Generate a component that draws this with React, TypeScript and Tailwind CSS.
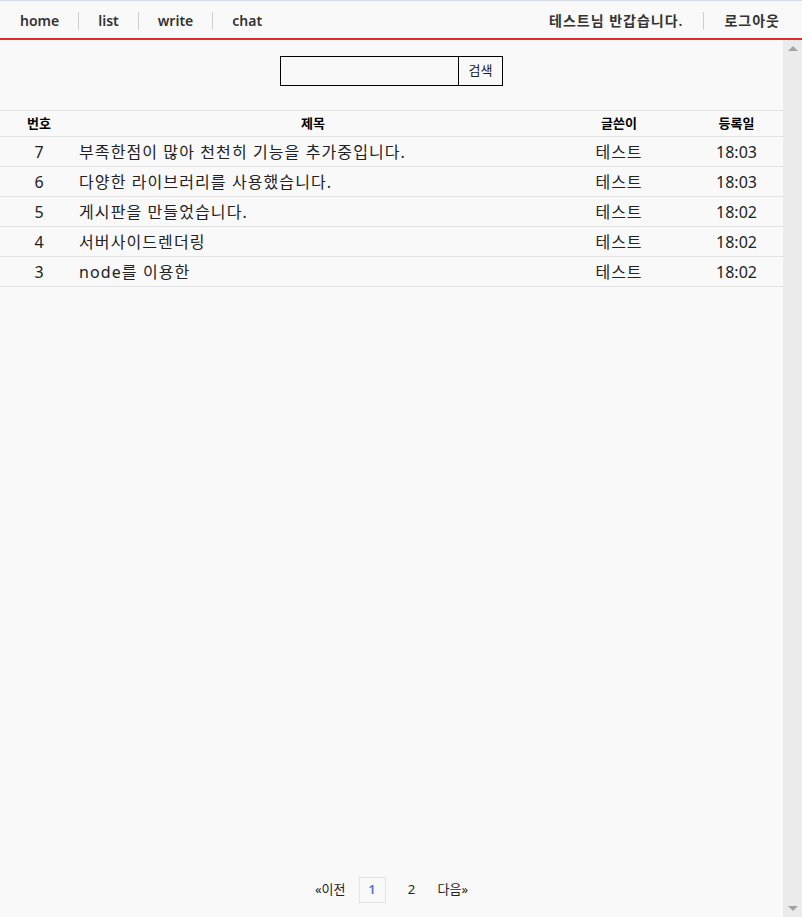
const font = { fontFamily: '"Noto Sans", "Noto Sans CJK KR", sans-serif' };

const posts = [
  { no: 7, title: "부족한점이 많아 천천히 기능을 추가중입니다.", writer: "테스트", date: "18:03" },
  { no: 6, title: "다양한 라이브러리를 사용했습니다.", writer: "테스트", date: "18:03" },
  { no: 5, title: "게시판을 만들었습니다.", writer: "테스트", date: "18:02" },
  { no: 4, title: "서버사이드렌더링", writer: "테스트", date: "18:02" },
  { no: 3, title: "node를 이용한", writer: "테스트", date: "18:02" },
];

function Header() {
  const links = ["home", "list", "write", "chat"];
  return (
    <header className="flex h-[40px] items-center justify-between border-t border-b-2 border-t-[#d4dae6] border-b-[#e02b2b] bg-[#f9f9f9] pt-[2px] text-[14px] font-semibold text-[#333]">
      <nav className="flex items-center">
        {links.map((l, i) => (
          <a
            key={l}
            className={
              i === 0
                ? "pl-5 pr-[19px] leading-[18px]"
                : "border-l border-[#d0d0d0] px-[19px] leading-[18px]"
            }
          >
            {l}
          </a>
        ))}
      </nav>
      <div className="flex items-center pr-[22px] tracking-[1px]">
        <span className="pr-5 leading-[18px]">테스트님 반갑습니다.</span>
        <a className="border-l border-[#d0d0d0] pl-5 leading-[18px]">로그아웃</a>
      </div>
    </header>
  );
}

function Scrollbar() {
  return (
    <div className="flex w-[19px] flex-col justify-between bg-[#ebebeb] py-[6px]">
      <div className="mx-auto h-0 w-0 border-x-[5px] border-b-[5px] border-x-transparent border-b-[#a3a3a3]" />
      <div className="mx-auto h-0 w-0 border-x-[5px] border-t-[5px] border-x-transparent border-t-[#a3a3a3]" />
    </div>
  );
}

export default function App() {
  return (
    <div className="h-[917px] overflow-hidden bg-[#f9f9f9] text-[#222]" style={font}>
      <Header />
      <div className="flex h-[877px]">
        <main className="flex flex-1 flex-col">
          <form className="mt-[16px] flex justify-center">
            <input className="h-[30px] w-[179px] border border-black bg-transparent outline-none" />
            <button type="button" className="h-[30px] w-[44px] border border-l-0 border-black text-[13px] text-[#222]">
              검색
            </button>
          </form>

          <table className="mt-[24px] w-full border-collapse">
            <thead>
              <tr className="border-y border-[#e3e3e3] text-[13px] font-bold text-black">
                <th className="h-[26px] w-[78px] font-bold">번호</th>
                <th className="w-[470px] font-bold">제목</th>
                <th className="w-[142px] font-bold">글쓴이</th>
                <th className="font-bold">등록일</th>
              </tr>
            </thead>
            <tbody>
              {posts.map((p) => (
                <tr key={p.no} className="border-b border-[#e3e3e3] text-[16px]">
                  <td className="h-[30px] text-center">{p.no}</td>
                  <td className="pl-px tracking-[1.1px]">{p.title}</td>
                  <td className="text-center tracking-[1px]">{p.writer}</td>
                  <td className="text-center">{p.date}</td>
                </tr>
              ))}
            </tbody>
          </table>

          <div className="mt-auto mb-[14px] flex items-center justify-center text-[13px] text-[#222]">
            <a className="mr-[13px]">«이전</a>
            <a className="flex h-[26px] w-[27px] items-center justify-center border border-[#e3e3e3] font-semibold text-[#4a78d6]">
              1
            </a>
            <a className="flex w-[52px] justify-center">2</a>
            <a>다음»</a>
          </div>
        </main>
        <Scrollbar />
      </div>
    </div>
  );
}
